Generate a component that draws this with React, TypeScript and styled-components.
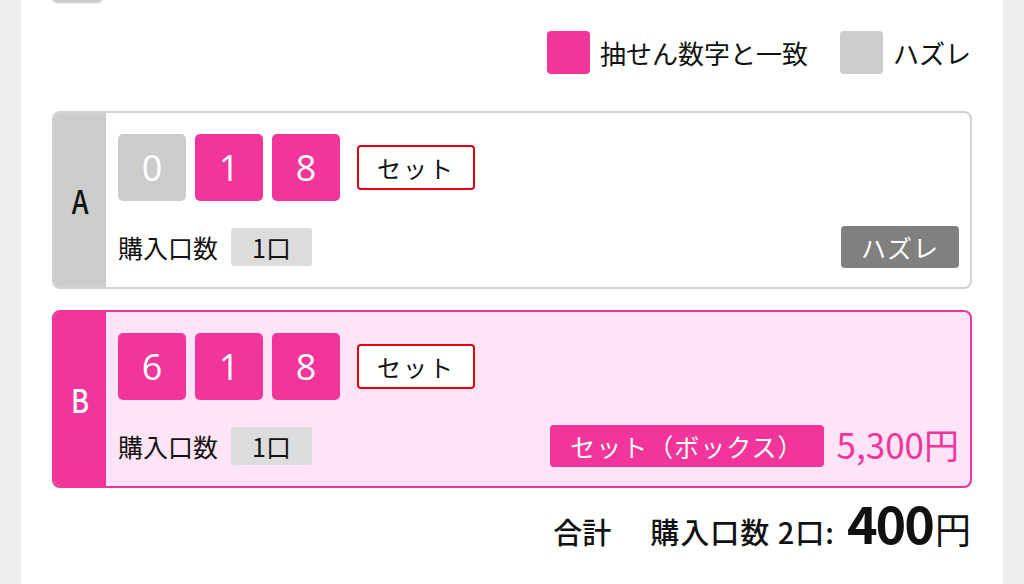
import React from "react";
import styled, { createGlobalStyle } from "styled-components";

const PINK = "#f2359a";

const Global = createGlobalStyle`
  html, body { margin: 0; padding: 0; background: #eeeeee; }
  body { font-family: "Noto Sans CJK JP", "Noto Sans", sans-serif; color: #111; }
`;

const Page = styled.div`
  margin: 0 21px;
  background: #fff;
  min-height: 584px;
  padding: 0 31px;
  box-sizing: border-box;
  overflow: hidden;
`;

const CutTab = styled.div`
  width: 51px;
  height: 40px;
  margin-top: -38px;
  background: #cccccc;
  border-radius: 6px;
  box-shadow: 0 1px 2px rgba(0, 0, 0, 0.25);
`;

const Legend = styled.div`
  display: flex;
  justify-content: flex-end;
  align-items: center;
  gap: 32px;
  margin-top: 29px;
  padding-right: 1px;
`;

const LegendItem = styled.div`
  display: flex;
  align-items: center;
  gap: 10px;
  font-size: 26px;
  line-height: 43px;
`;

const Swatch = styled.span<{ $c: string }>`
  width: 43px;
  height: 43px;
  border-radius: 4px;
  background: ${(p) => p.$c};
`;

const Card = styled.div<{ $hit?: boolean }>`
  display: grid;
  grid-template-columns: 52px 1fr;
  margin-top: ${(p) => (p.$hit ? "21px" : "37px")};
  height: 178px;
  box-sizing: border-box;
  border: 2px solid ${(p) => (p.$hit ? PINK : "#d2d2d2")};
  border-radius: 8px;
  background: ${(p) => (p.$hit ? "#ffe4f7" : "#fff")};
  overflow: hidden;
`;

const LabelCol = styled.div<{ $hit?: boolean }>`
  display: flex;
  align-items: center;
  justify-content: center;
  background: ${(p) => (p.$hit ? PINK : "#cccccc")};
  color: ${(p) => (p.$hit ? "#fff" : "#111")};
  font-size: 33px;
  font-weight: 500;
`;

const LabelText = styled.span`
  display: inline-block;
  transform: scaleX(0.82);
`;

const Body = styled.div`
  display: flex;
  flex-direction: column;
  padding: 21px 11px 0 12px;
`;

const Numbers = styled.div`
  display: flex;
  align-items: center;
  gap: 9px;
`;

const NumBox = styled.div<{ $hit: boolean }>`
  width: 68px;
  height: 67px;
  border-radius: 5px;
  background: ${(p) => (p.$hit ? PINK : "#cccccc")};
  color: #fff;
  font-size: 36px;
  font-family: "Open Sans", "Noto Sans", sans-serif;
  display: flex;
  align-items: center;
  justify-content: center;
`;

const SetButton = styled.div`
  margin-left: 8px;
  width: 118px;
  height: 45px;
  box-sizing: border-box;
  border: 2px solid #e60012;
  border-radius: 4px;
  background: #fff;
  font-size: 24px;
  display: flex;
  align-items: center;
  justify-content: center;
  letter-spacing: 2px;
`;

const InfoRow = styled.div`
  display: flex;
  align-items: center;
  justify-content: space-between;
  margin-top: 25px;
  height: 41px;
`;

const Count = styled.div`
  display: flex;
  align-items: center;
  gap: 13px;
  font-size: 25px;
`;

const CountBadge = styled.span`
  width: 81px;
  height: 38px;
  border-radius: 3px;
  background: #dcdcdc;
  display: flex;
  align-items: center;
  justify-content: center;
  font-size: 25px;
`;

const Result = styled.div`
  display: flex;
  align-items: center;
  gap: 13px;
`;

const ResultBadge = styled.span<{ $hit?: boolean }>`
  height: 42px;
  padding: 0 20px;
  border-radius: 4px;
  background: ${(p) => (p.$hit ? PINK : "#808080")};
  color: #fff;
  font-size: 25px;
  letter-spacing: 1px;
  display: flex;
  align-items: center;
`;

const Price = styled.span`
  color: ${PINK};
  font-size: 35px;
  line-height: 1;
  margin-top: -4px;
`;

const Total = styled.div`
  display: flex;
  justify-content: flex-end;
  align-items: baseline;
  margin-top: 8px;
  padding-right: 1px;
  font-size: 29px;
  font-weight: 500;
`;

const TotalLabel = styled.span`
  margin-right: 39px;
`;

const Counted = styled.span`
  letter-spacing: 1px;
`;

const Amount = styled.span`
  margin-left: 12px;
  font-size: 52px;
  font-weight: 700;
  letter-spacing: -2px;
  line-height: 1;
`;

const Yen = styled.span`
  font-size: 36px;
  font-weight: 400;
  margin-left: 2px;
`;

type Row = {
  label: string;
  nums: { n: number; hit: boolean }[];
  count: string;
  win?: { type: string; price: string };
};

const rows: Row[] = [
  {
    label: "A",
    nums: [
      { n: 0, hit: false },
      { n: 1, hit: true },
      { n: 8, hit: true },
    ],
    count: "1口",
  },
  {
    label: "B",
    nums: [
      { n: 6, hit: true },
      { n: 1, hit: true },
      { n: 8, hit: true },
    ],
    count: "1口",
    win: { type: "セット（ボックス）", price: "5,300円" },
  },
];

export default function App() {
  return (
    <>
      <Global />
      <Page>
        <CutTab />
        <Legend>
          <LegendItem>
            <Swatch $c={PINK} />
            抽せん数字と一致
          </LegendItem>
          <LegendItem>
            <Swatch $c="#cccccc" />
            ハズレ
          </LegendItem>
        </Legend>
        {rows.map((r) => {
          const hit = !!r.win;
          return (
            <Card key={r.label} $hit={hit}>
              <LabelCol $hit={hit}>
                <LabelText>{r.label}</LabelText>
              </LabelCol>
              <Body>
                <Numbers>
                  {r.nums.map((x, i) => (
                    <NumBox key={i} $hit={x.hit}>
                      {x.n}
                    </NumBox>
                  ))}
                  <SetButton>セット</SetButton>
                </Numbers>
                <InfoRow>
                  <Count>
                    購入口数
                    <CountBadge>{r.count}</CountBadge>
                  </Count>
                  <Result>
                    {r.win ? (
                      <>
                        <ResultBadge $hit>{r.win.type}</ResultBadge>
                        <Price>{r.win.price}</Price>
                      </>
                    ) : (
                      <ResultBadge>ハズレ</ResultBadge>
                    )}
                  </Result>
                </InfoRow>
              </Body>
            </Card>
          );
        })}
        <Total>
          <TotalLabel>合計</TotalLabel>
          <Counted>購入口数 2口:</Counted>
          <Amount>400</Amount>
          <Yen>円</Yen>
        </Total>
      </Page>
    </>
  );
}
